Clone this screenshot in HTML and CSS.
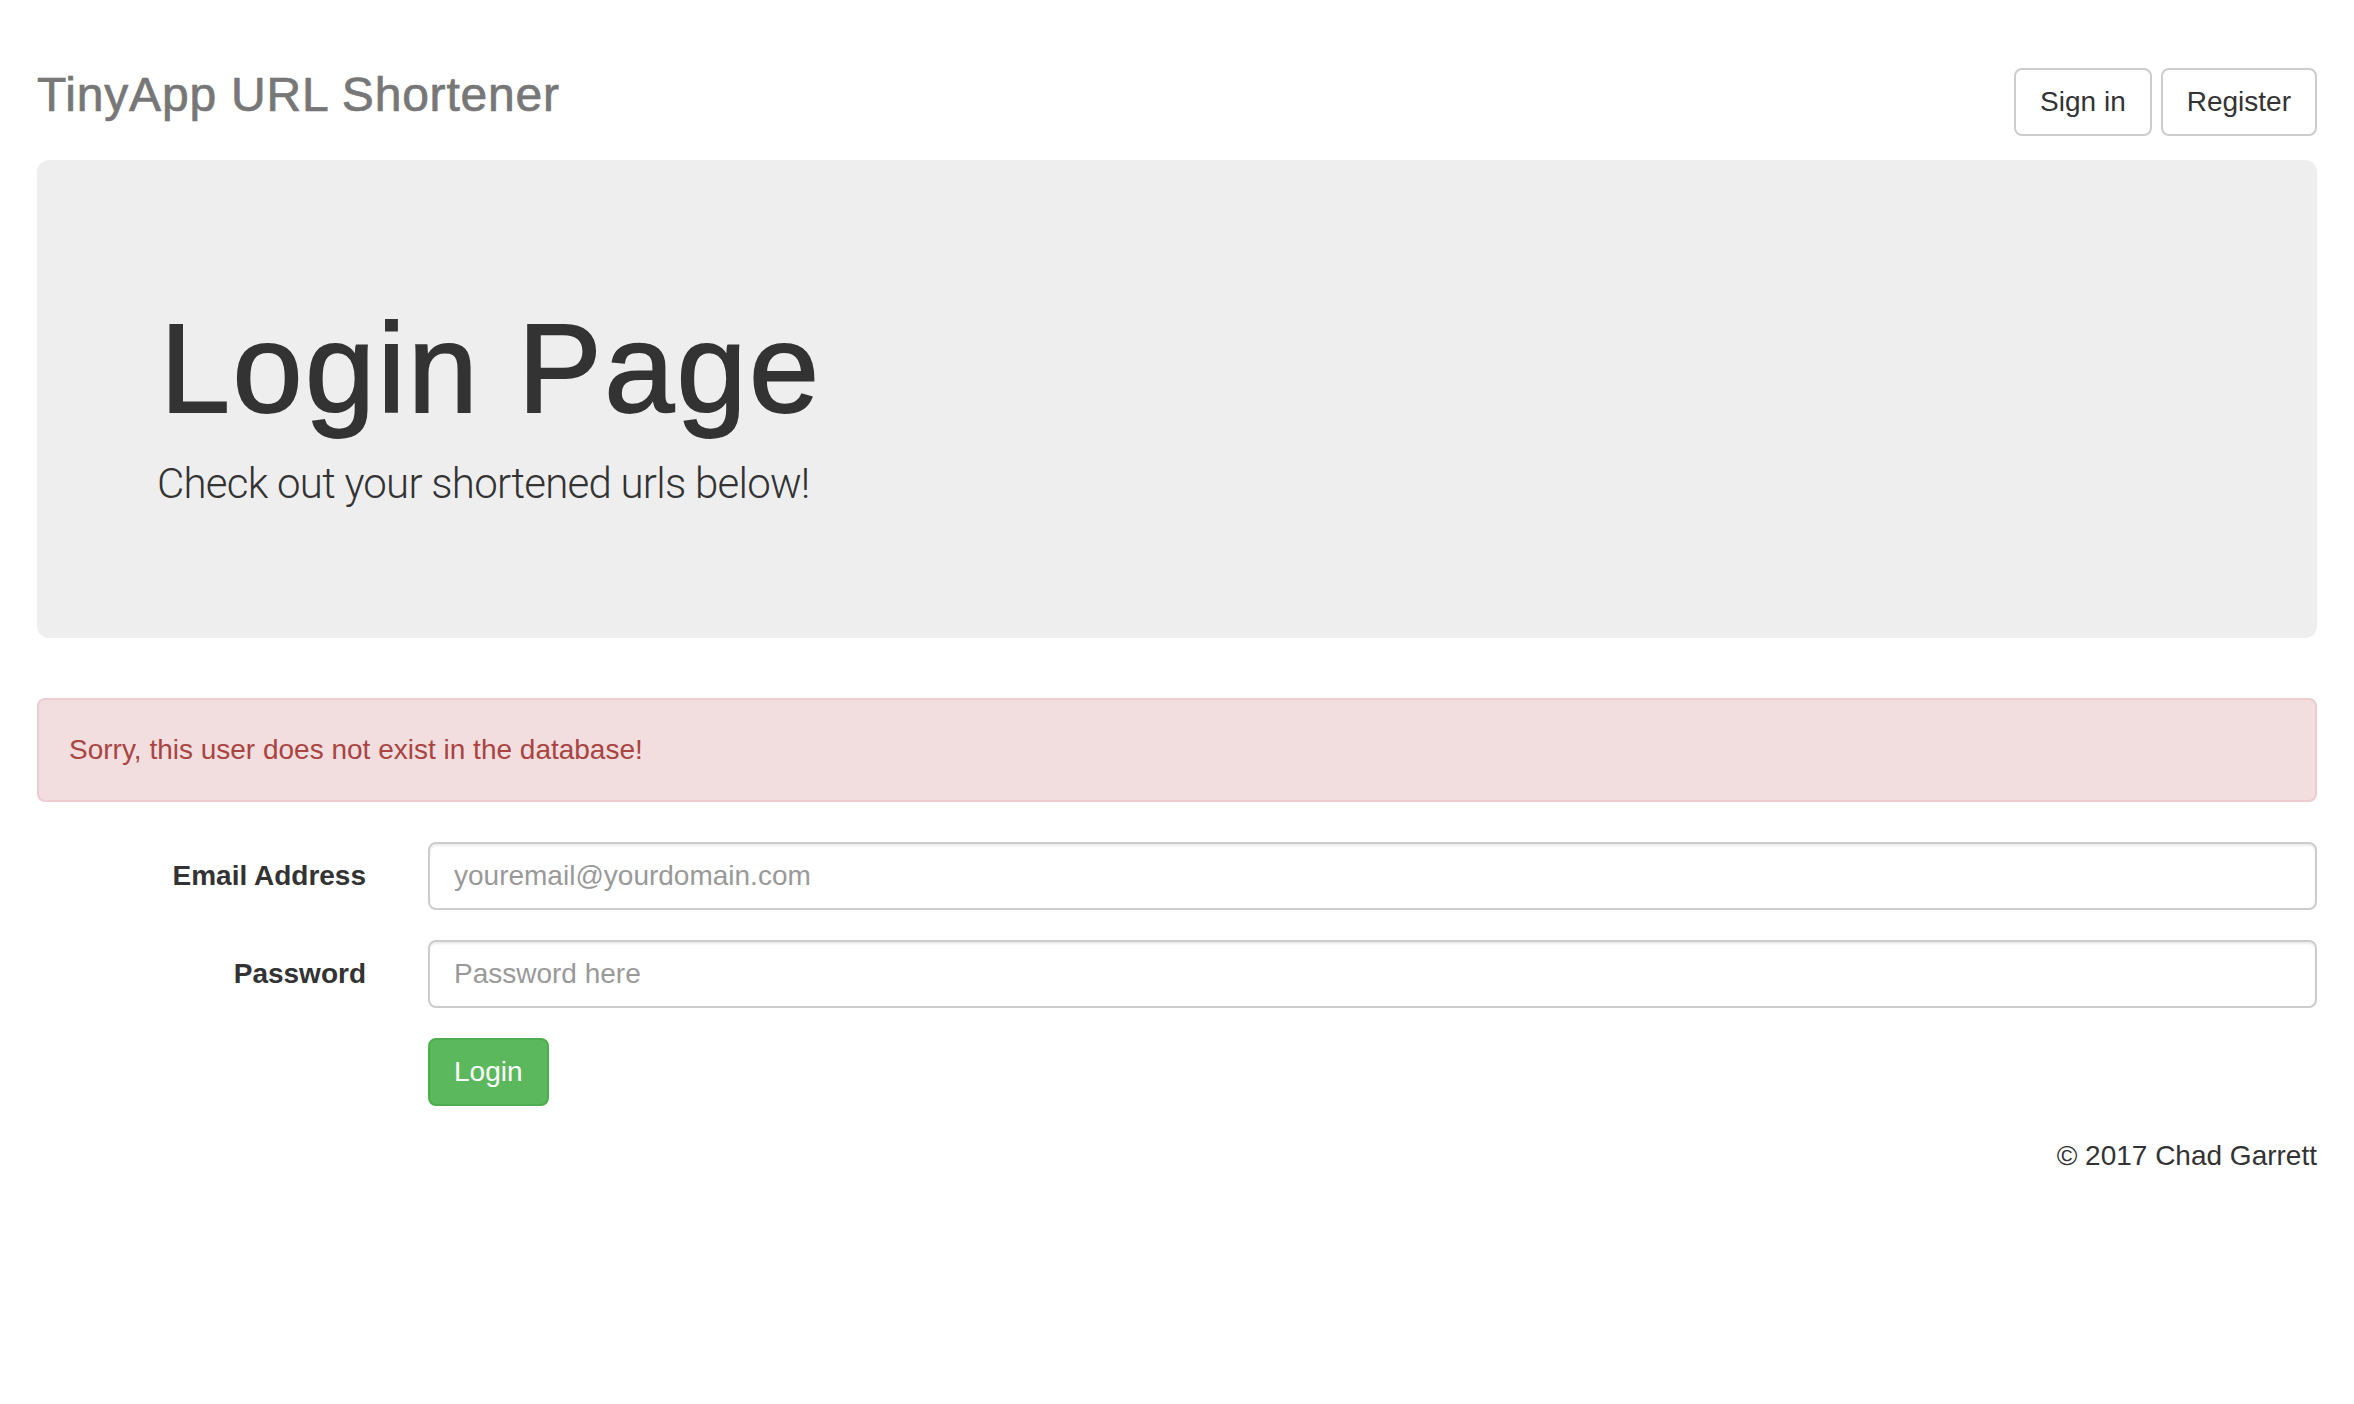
FILE: index.html
```html
<!DOCTYPE html>
<html lang="en">
<head>
<meta charset="utf-8">
<title>TinyApp URL Shortener</title>
<link rel="stylesheet" href="styles.css">
</head>
<body>
<div class="page">
  <header class="header">
    <h3 class="brand">TinyApp URL Shortener</h3>
    <nav class="nav">
      <a class="btn btn-default" href="#">Sign in</a>
      <a class="btn btn-default" href="#">Register</a>
    </nav>
  </header>

  <section class="jumbotron">
    <h1 class="jumbo-title">Login Page</h1>
    <p class="lead">Check out your shortened urls below!</p>
  </section>

  <div class="alert">Sorry, this user does not exist in the database!</div>

  <form class="login-form" action="#">
    <label class="form-label" for="email">Email Address</label>
    <input class="form-input" id="email" type="email" placeholder="youremail@yourdomain.com">
    <label class="form-label" for="password">Password</label>
    <input class="form-input" id="password" type="password" placeholder="Password here">
    <button class="btn btn-success" type="button">Login</button>
  </form>

  <footer class="footer">© 2017 Chad Garrett</footer>
</div>
</body>
</html>
```
FILE: styles.css
```css
* {
  box-sizing: border-box;
}

html, body {
  margin: 0;
  padding: 0;
  background: #fff;
}

body {
  font-family: "Liberation Sans", Arial, Helvetica, sans-serif;
  font-size: 28px;
  line-height: 40px;
  color: #333;
}

.page {
  padding: 0 37px 0 37px;
}

/* Header */
.header {
  display: flex;
  justify-content: space-between;
  align-items: flex-start;
  padding-top: 68px;
  margin-bottom: 24px;
}

.brand {
  margin: 1px 0 0;
  font-size: 48px;
  line-height: 1.1;
  font-weight: 400;
  letter-spacing: 0.8px;
  -webkit-text-stroke: 0.7px #777;
  color: #777;
}

.nav {
  display: flex;
  gap: 9px;
}

.btn {
  display: inline-block;
  padding: 12px 24px;
  font-family: inherit;
  font-size: 28px;
  line-height: 40px;
  text-decoration: none;
  border: 2px solid transparent;
  border-radius: 8px;
  cursor: pointer;
  white-space: nowrap;
}

.btn-default {
  color: #333;
  background: #fff;
  border-color: #ccc;
}

.btn-success {
  color: #fff;
  background: #5cb85c;
  border-color: #4cae4c;
}

/* Jumbotron */
.jumbotron {
  background: #eee;
  border-radius: 12px;
  padding: 96px 120px;
  margin-bottom: 60px;
}

.jumbo-title {
  margin: 44px 0 15px 3px;
  font-size: 126px;
  line-height: 1.1;
  font-weight: 400;
  letter-spacing: 2.4px;
  -webkit-text-stroke: 1.8px #333;
  color: #333;
}

.lead {
  margin: 0 0 28px;
  font-family: Roboto, "Liberation Sans", sans-serif;
  font-size: 42px;
  line-height: 60px;
  font-weight: 300;
  letter-spacing: -0.75px;
  color: #333;
}

/* Alert */
.alert {
  padding: 30px;
  border: 2px solid #ebccd1;
  border-radius: 8px;
  background: #f2dede;
  color: #a94442;
  margin-bottom: 40px;
}

/* Form */
.login-form {
  display: grid;
  grid-template-columns: 329px 1fr;
  column-gap: 62px;
  row-gap: 30px;
  align-items: start;
  margin-bottom: 30px;
}

.form-label {
  padding-top: 14px;
  text-align: right;
  font-weight: 700;
}

.form-input {
  width: 100%;
  height: 68px;
  padding: 12px 24px;
  font-family: inherit;
  font-size: 28px;
  line-height: 40px;
  color: #555;
  background: #fff;
  border: 2px solid #ccc;
  border-radius: 8px;
  box-shadow: inset 0 2px 2px rgba(0, 0, 0, 0.075);
}

.form-input::placeholder {
  color: #999;
}

.login-form .btn-success {
  grid-column: 2;
  justify-self: start;
}

/* Footer */
.footer {
  text-align: right;
}
```
